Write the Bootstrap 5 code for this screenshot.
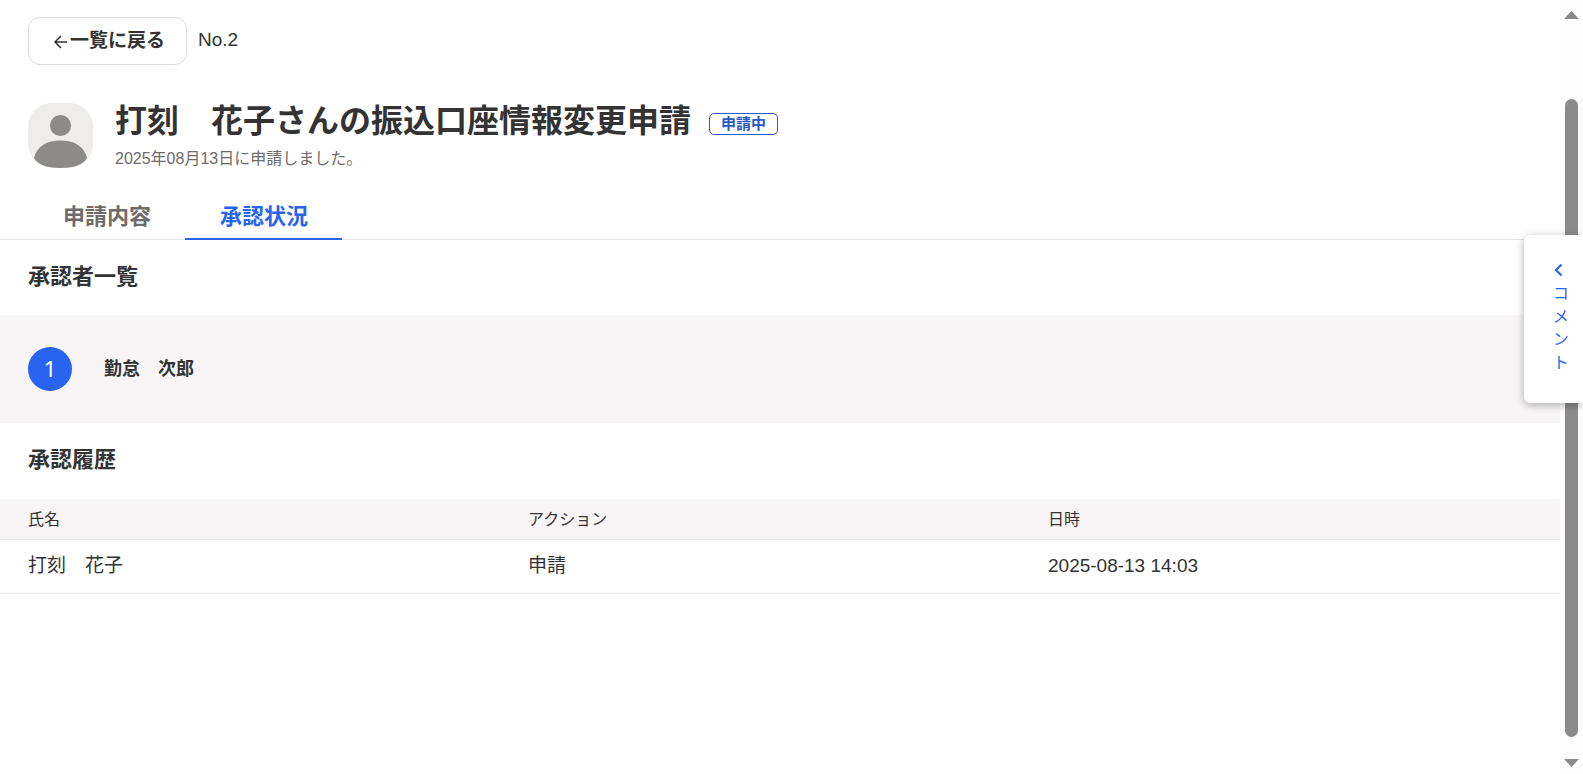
<!DOCTYPE html>
<html lang="ja">
<head>
<meta charset="utf-8">
<meta name="viewport" content="width=device-width, initial-scale=1">
<title>承認状況</title>
<link href="https://cdn.jsdelivr.net/npm/bootstrap@5.3.0/dist/css/bootstrap.min.css" rel="stylesheet">
<style>
  body { font-family: "Liberation Sans", "Noto Sans CJK JP", sans-serif; color: #333; background: #fff; }
  .page-main { min-width: 0; padding-top: 17px; }
  .gutter { padding-left: 28px; padding-right: 28px; }
  .btn-back { height: 48px; padding: 0 21px 0 24px; border: 1px solid #dcdcdc; border-radius: 12px; font-size: 19px; line-height: 28px; font-weight: 700; color: #333; gap: 1px; }
  .btn-back svg { margin-top: 2px; }
  .top-row { gap: 11px; }
  .request-no { font-size: 19px; line-height: 28px; margin-bottom: 2px; }
  .request-head { margin-top: 38px; gap: 22px; }
  .avatar { width: 65px; height: 65px; flex: none; }
  .request-title { font-size: 32px; line-height: 36px; font-weight: 700; }
  .title-row { gap: 18px; }
  .status-tag { height: 22px; padding: 0 11px; border: 1px solid #285ac8; border-radius: 5px; color: #285ac8; font-size: 15px; line-height: 19px; font-weight: 700; margin-top: 6px; }
  .request-date { font-size: 16px; line-height: 24px; margin-top: 8px; color: #6e6b69; }
  .tab-bar { margin-top: 23px; border-bottom: 1px solid #e6e6e6; }
  .tab-bar .nav-link { height: 46px; margin-bottom: -1px; padding: 6px 34px 6px 35px; border: 0; border-bottom: 2px solid transparent; border-radius: 0; font-size: 22px; line-height: 34px; font-weight: 700; color: #6e6b69; background: none; }
  .tab-bar .nav-link.active { color: #2864f0; border-bottom-color: #2864f0; background: none; }
  .section-title { font-size: 22px; line-height: 33px; padding-top: 20px; padding-bottom: 22px; font-weight: 700; }
  .approver { background: #f7f5f6; min-height: 108px; gap: 32px; }
  .step-no { width: 44px; height: 44px; background: #2864f0; color: #fff; font-family: "Noto Sans", "Noto Sans CJK JP", sans-serif; font-size: 22px; line-height: 43px; }
  .approver-name { font-size: 18px; line-height: 27px; font-weight: 700; }
  .history-title { padding-bottom: 23px; }
  .history { table-layout: fixed; --bs-table-color: #333; }
  .history th, .history td { padding: 8px; border-bottom: 1px solid #e6e6e6; color: #333; font-weight: 400; }
  .history th { background: #f7f5f6; font-size: 16px; line-height: 24px; padding-top: 9px; padding-bottom: 7px; }
  .history td { font-size: 19px; line-height: 29px; padding-top: 11px; padding-bottom: 13px; }
  .history th:first-child, .history td:first-child { padding-left: 28px; }
  .scroll-track { width: 23px; height: 100vh; flex: none; background: #fcfcfc; padding: 11px 0 7px; }
  .scroll-thumb { width: 13px; border-radius: 7px; background: #8b8b8b; flex: 638; }
  .gap-above { flex: 80; }
  .gap-below { flex: 22; }
  .comment-tab { top: 235px; right: 0; width: 59px; height: 168px; border: 0; border-radius: 6px 0 0 6px; background: #fff; color: #2864f0; box-shadow: 0 2px 8px rgba(0,0,0,.3); z-index: 1030; padding: 28px 14px 0 29px; }
  .comment-tab svg { display: block; }
  .comment-label { display: block; width: 16px; font-size: 16px; line-height: 23px; margin-top: 5px; word-break: break-all; }
</style>
</head>
<body>
<div class="d-flex min-vh-100">
  <main class="page-main flex-grow-1">
    <div class="gutter top-row d-flex align-items-center">
      <button type="button" class="btn btn-back d-flex align-items-center">
        <svg width="16" height="16" viewBox="0 0 16 16" fill="none" stroke="#333" stroke-width="1.5" aria-hidden="true"><path d="M14 8H2M8 2 2 8l6 6"/></svg>
        <span>一覧に戻る</span>
      </button>
      <span class="request-no">No.2</span>
    </div>

    <header class="gutter request-head d-flex">
      <svg class="avatar" viewBox="0 0 65 65" aria-hidden="true">
        <defs><clipPath id="avatarClip"><rect width="65" height="65" rx="24"/></clipPath></defs>
        <g clip-path="url(#avatarClip)">
          <rect width="65" height="65" fill="#eeedec"/>
          <circle cx="32.500" cy="22.500" r="10.500" fill="#8c8b89"/>
          <path d="M6 55C9 43 19 37.500 32.500 37.500S56 43 59 55C56 61 47 65 32.500 65S9 61 6 55Z" fill="#8c8b89"/>
        </g>
      </svg>
      <div>
        <div class="title-row d-flex align-items-center">
          <h1 class="request-title mb-0">打刻　花子さんの振込口座情報変更申請</h1>
          <span class="status-tag">申請中</span>
        </div>
        <p class="request-date mb-0">2025年08月13日に申請しました。</p>
      </div>
    </header>

    <ul class="nav tab-bar gutter" role="tablist">
      <li class="nav-item" role="presentation"><button class="nav-link" type="button" role="tab" aria-selected="false">申請内容</button></li>
      <li class="nav-item" role="presentation"><button class="nav-link active" type="button" role="tab" aria-selected="true">承認状況</button></li>
    </ul>

    <section>
      <h2 class="section-title gutter mb-0">承認者一覧</h2>
      <div class="approver gutter d-flex align-items-center">
        <span class="step-no rounded-circle text-center">1</span>
        <span class="approver-name">勤怠　次郎</span>
      </div>
    </section>

    <section>
      <h2 class="section-title history-title gutter mb-0">承認履歴</h2>
      <table class="table history mb-0">
        <thead><tr><th scope="col">氏名</th><th scope="col">アクション</th><th scope="col">日時</th></tr></thead>
        <tbody><tr><td>打刻　花子</td><td>申請</td><td>2025-08-13 14:03</td></tr></tbody>
      </table>
    </section>
  </main>

  <div class="scroll-track sticky-top d-flex flex-column align-items-center" aria-hidden="true">
    <svg width="15" height="8" viewBox="0 0 15 8"><path d="M7.500 0 15 8H0Z" fill="#8b8b8b"/></svg>
    <div class="gap-above"></div>
    <div class="scroll-thumb"></div>
    <div class="gap-below"></div>
    <svg width="15" height="8" viewBox="0 0 15 8"><path d="M0 0H15L7.500 8Z" fill="#8b8b8b"/></svg>
  </div>
</div>

<button type="button" class="comment-tab position-fixed d-flex flex-column">
  <svg width="10" height="14" viewBox="0 0 10 14" fill="none" stroke="#2864f0" stroke-width="2.200" aria-hidden="true"><path d="M8.500 1.500 3 7l5.500 5.500"/></svg>
  <span class="comment-label">コメント</span>
</button>
<script src="https://cdn.jsdelivr.net/npm/bootstrap@5.3.0/dist/js/bootstrap.bundle.min.js"></script>
</body>
</html>
